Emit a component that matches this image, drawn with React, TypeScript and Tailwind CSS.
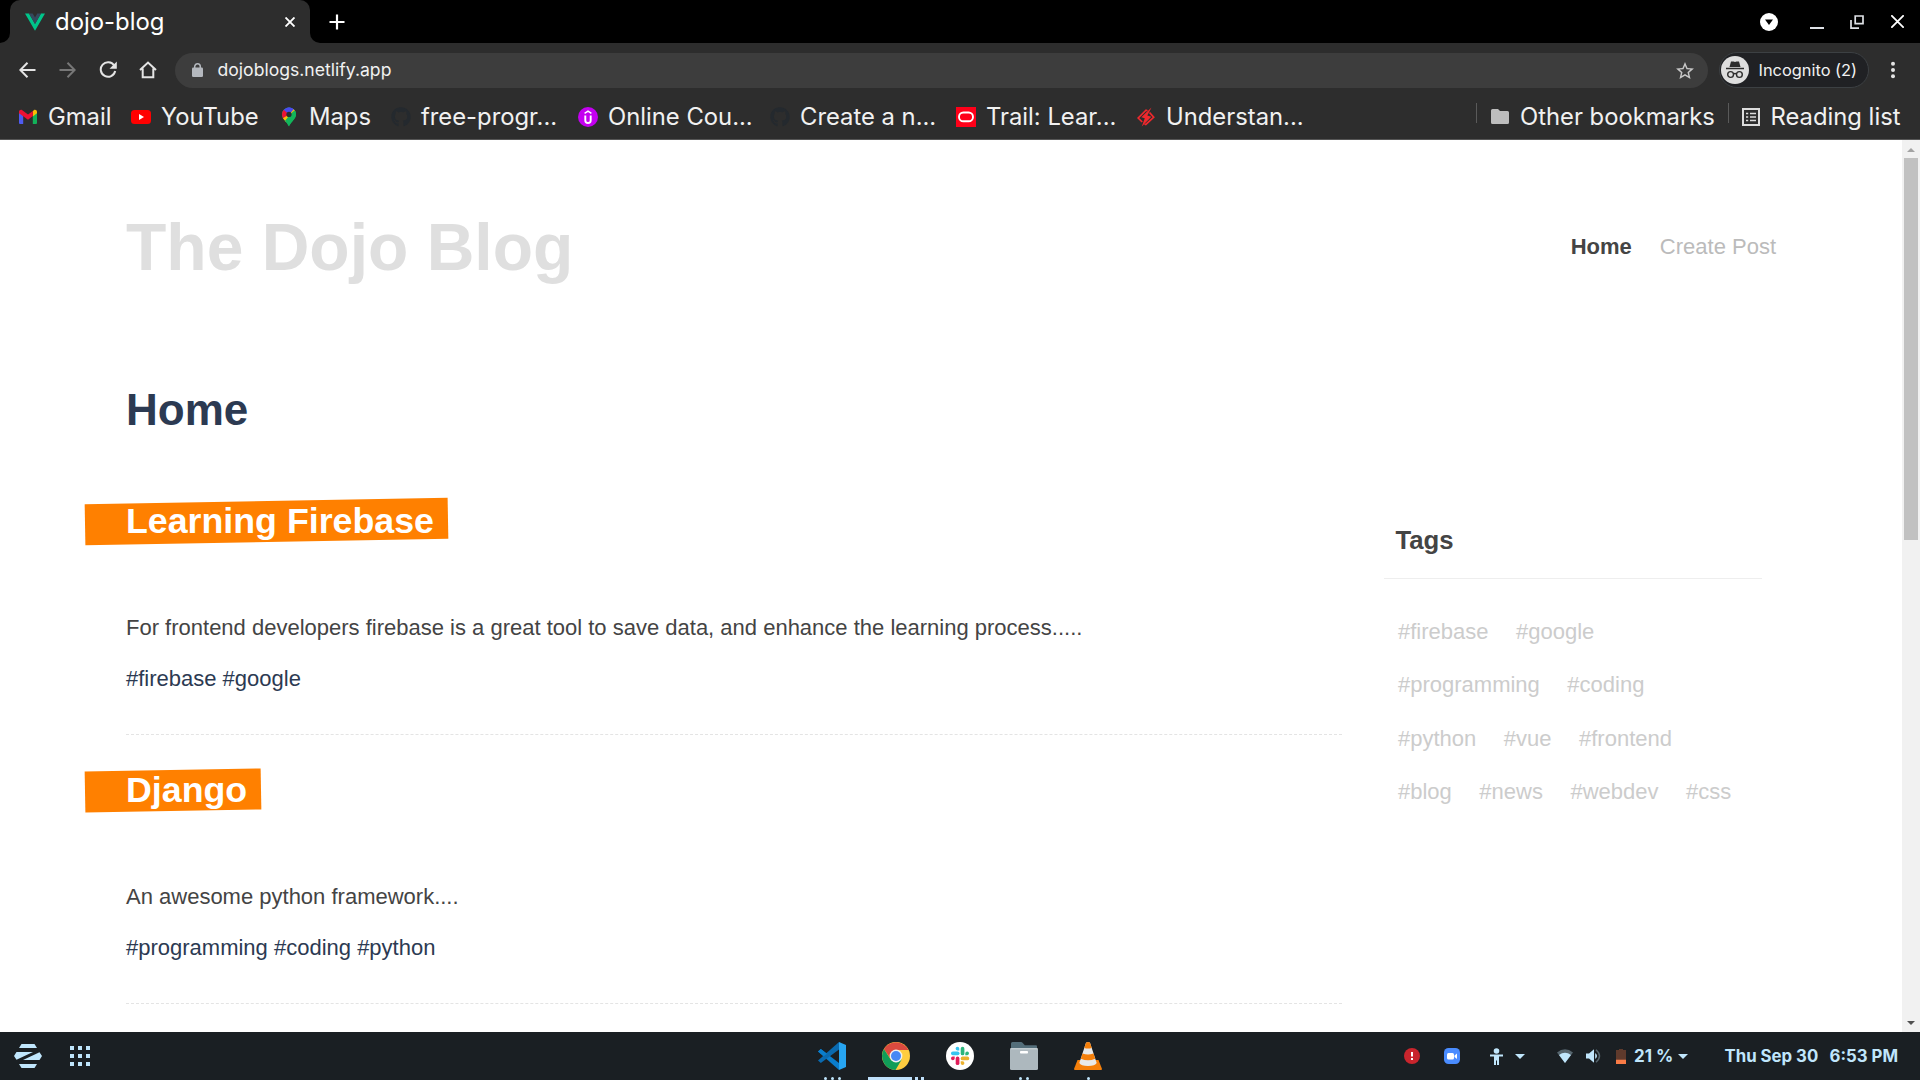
import React from "react";
import { FaGithub } from "react-icons/fa";

const GmailIcon = () => (
  <svg viewBox="0 0 20 20" className="size-5 shrink-0">
    <path d="M1 5.5V16q0 1 1 1h3.2V8.5z" fill="#4f5bf0" />
    <path d="M19 5.5V16q0 1-1 1h-3.200V8.500z" fill="#12b159" />
    <path d="M14.800 4.500v5L19 6.300V4.800c0-1.800-2-2.600-3.300-1.500z" fill="#fbbc04" />
    <path d="M1 4.800c0-1.800 2-2.600 3.300-1.500L10 7.600l4.800-3.700v5.200L10 12.800 5.200 9.200 1 6.200z" fill="#ee1133" />
  </svg>
);
const YouTubeIcon = () => (
  <svg viewBox="0 0 20 20" className="size-5 shrink-0">
    <rect x="0" y="3" width="20" height="14" rx="3.500" fill="#ff0000" />
    <path d="M8 7l5 3-5 3z" fill="#fff" />
  </svg>
);
const MapsIcon = () => (
  <svg viewBox="0 0 20 20" className="size-5 shrink-0">
    <defs>
      <clipPath id="pin">
        <path d="M10 .4a7 7 0 0 0-7 7c0 5 4.700 6.500 7 12.200 2.300-5.700 7-7.200 7-12.200a7 7 0 0 0-7-7z" />
      </clipPath>
    </defs>
    <g clipPath="url(#pin)">
      <rect width="20" height="20" fill="#12b55b" />
      <path d="M0 0h20v2L10 7.500 0 3z" fill="#4a49ee" />
      <path d="M10 7.400L4.400 2.600 0 7v6l4-1z" fill="#ee1133" />
      <path d="M2 12.500L10 7.400 14.500 2l3.500 1-8.500 8.500-4 5z" fill="#fbbc04" />
      <path d="M7 0h9.500l-6 7z" fill="#4a49ee" />
      <path d="M12.500 6L16 3l3 3-6 9-4 5-4-5z" fill="#12b55b" />
    </g>
    <circle cx="10" cy="7.400" r="2.600" fill="#2d2d2d" />
  </svg>
);
const GithubIcon = () => <FaGithub className="size-5 shrink-0 text-[#24292e]" />;
const UdemyIcon = () => (
  <svg viewBox="0 0 20 20" className="size-5 shrink-0" fill="none" stroke="#fff">
    <circle cx="10" cy="10" r="10" fill="#c400f0" stroke="none" />
    <path d="M7.300 8.500v4.700q0 2.800 2.700 2.800t2.700-2.800V8.500" strokeWidth="1.900" />
    <path d="M6.600 6.300L10 4.200l3.400 2.100" strokeWidth="1.500" />
  </svg>
);
const OracleIcon = () => (
  <svg viewBox="0 0 20 20" className="size-5 shrink-0">
    <rect width="20" height="20" fill="#ff0019" />
    <rect x="3" y="5.500" width="14" height="8.800" rx="4.400" fill="none" stroke="#fff" strokeWidth="1.900" />
  </svg>
);
const BoltIcon = () => (
  <svg viewBox="0 0 20 20" className="size-5 shrink-0" fill="none" stroke="#f0282d" strokeWidth="1.700">
    <path d="M11.500 3.800L10 3.200 2.200 11l4 4M13.500 5.500l4.200 4.800L9.800 17.500l-1.300-.6" />
    <path d="M15.500.5L5.300 10.200l3.500 1L5.800 19.500l9.500-9.700-4-1.200z" fill="#f0282d" stroke="none" />
  </svg>
);

const BOOKMARKS = [
  { label: "Gmail", icon: <GmailIcon />, width: "w-[113px]" },
  { label: "YouTube", icon: <YouTubeIcon />, width: "w-[148px]" },
  { label: "Maps", icon: <MapsIcon />, width: "w-[112px]" },
  { label: "free-progr...", icon: <GithubIcon />, width: "w-[187px]" },
  { label: "Online Cou...", icon: <UdemyIcon />, width: "w-[192px]" },
  { label: "Create a n...", icon: <GithubIcon />, width: "w-[186px]" },
  { label: "Trail: Lear...", icon: <OracleIcon />, width: "w-[180px]" },
  { label: "Understan...", icon: <BoltIcon />, width: "w-[180px]" },
];

function TabStrip() {
  return (
    <div className="flex h-[43px] shrink-0 items-stretch bg-black">
      <div className="flex w-[10px] items-end bg-[#2d2d2d]">
        <div className="h-full w-full rounded-br-[10px] bg-black" />
      </div>
      <div className="bg-black">
        <div className="flex h-full w-[300px] items-center rounded-t-[10px] bg-[#2d2d2d] pl-[15px]">
          <svg viewBox="0 0 20 18" className="h-[18px] w-5">
            <path d="M0 .5h4L10 11 16 .5h4L10 17.700z" fill="#00c58a" />
            <path d="M4 .5h3.700L10 4.500 12.300.5H16L10 11z" fill="#34495e" />
          </svg>
          <span className="ml-[10px] w-[229.500px] text-[23.900px] text-white">dojo-blog</span>
          <svg viewBox="0 0 10 10" className="size-[10px]" stroke="#fff" strokeWidth="1.900">
            <path d="M.5.5l9 9M9.500.5l-9 9" />
          </svg>
        </div>
      </div>
      <div className="flex w-[10px] bg-[#2d2d2d]">
        <div className="h-full w-full rounded-bl-[10px] bg-black" />
      </div>
      <svg viewBox="0 0 16 16" className="mt-[13.500px] ml-[9px] size-4" stroke="#fff" strokeWidth="2.200">
        <path d="M8 .5v15M.5 8h15" />
      </svg>
      <div className="mr-4 ml-auto flex items-center">
        <svg viewBox="0 0 18 18" className="mr-[32px] size-[18px]">
          <circle cx="9" cy="9" r="9" fill="#fff" />
          <path d="M5 6.500h8L9 12z" fill="#000" />
        </svg>
        <div className="mt-3 mr-[26px] h-[2px] w-[14px] bg-[#dee1e6]" />
        <svg viewBox="0 0 14 14" className="mr-[27px] size-[14px]" fill="none" stroke="#dee1e6" strokeWidth="1.700">
          <path d="M5.200 1h7.800v7.600H5.200z" />
          <path d="M1 5v8.200h8" />
        </svg>
        <svg viewBox="0 0 13 13" className="size-[13px]" stroke="#fff" strokeWidth="1.800">
          <path d="M.3.3l12.400 12.400M12.700.3L.3 12.700" />
        </svg>
      </div>
    </div>
  );
}

function Toolbar() {
  return (
    <div className="flex h-[54px] shrink-0 items-center pl-[19px]">
      <svg viewBox="0 0 17 16" className="h-4 w-[17px]" fill="none" stroke="#e4e4e4" strokeWidth="2">
        <path d="M16.500 8H1.500M8.500.8L1.300 8l7.200 7.200" />
      </svg>
      <svg viewBox="0 0 17 16" className="ml-[23px] h-4 w-[17px]" fill="none" stroke="#777" strokeWidth="2">
        <path d="M.5 8h15M8.500.8L15.700 8l-7.200 7.200" />
      </svg>
      <svg viewBox="0 0 18 18" className="ml-[23px] size-[18px]" fill="none" stroke="#e4e4e4" strokeWidth="2">
        <path d="M15.200 4.500A7.300 7.300 0 1 0 16.200 10" />
        <path d="M17.800.5v7.300h-7.300z" fill="#e4e4e4" stroke="none" />
      </svg>
      <svg viewBox="0 0 18 18" className="ml-[22px] size-[18px]" fill="none" stroke="#e4e4e4" strokeWidth="2">
        <path d="M1 9L9 1.600 17 9M3.700 7.500v8.700h10.600V7.500" />
      </svg>
      <div className="ml-[18px] flex h-[35px] w-[1533px] items-center rounded-full bg-[#3d3d3d] pl-[17px]">
        <svg viewBox="0 0 11 14" className="h-[14px] w-[11px]">
          <rect y="4.500" width="11" height="9.500" rx="1.300" fill="#b4b8be" />
          <path d="M2.700 5.500V3.600a2.800 2.800 0 0 1 5.600 0v1.900" fill="none" stroke="#b4b8be" strokeWidth="1.500" />
        </svg>
        <span className="ml-[14.500px] pt-px text-[17.600px] text-[#f1f1f1]">dojoblogs.netlify.app</span>
        <svg viewBox="2 2 20 19" className="mr-[14px] ml-auto h-[17px] w-[18px]">
          <path
            fill="#c8c8c8"
            d="M22 9.240l-7.190-.62L12 2 9.190 8.630 2 9.240l5.460 4.730L5.820 21 12 17.270 18.180 21l-1.630-7.030L22 9.240zM12 15.400l-3.760 2.270 1-4.280-3.320-2.880 4.380-.38L12 6.100l1.710 4.040 4.380.38-3.320 2.880 1 4.280L12 15.400z"
          />
        </svg>
      </div>
      <div className="ml-[11px] flex h-[36px] w-[150px] items-center rounded-full border border-[#3c4043] bg-[#202124] pl-px">
        <svg viewBox="0 0 28 28" className="size-7 shrink-0">
          <circle cx="14" cy="14" r="14" fill="#dedede" />
          <path d="M10 5.500h2.500q1.500.8 3 0H18l1.500 5.500h-11z" fill="#2d2d2d" />
          <path d="M5 12.500h18" stroke="#2d2d2d" strokeWidth="1.500" />
          <g fill="none" stroke="#2d2d2d" strokeWidth="1.400">
            <circle cx="9.600" cy="18.500" r="2.900" />
            <circle cx="18.400" cy="18.500" r="2.900" />
            <path d="M12.500 18q1.500-1 3 0" />
          </g>
        </svg>
        <span className="ml-[9.500px] text-[16.400px] whitespace-nowrap text-[#f1f1f1]">Incognito (2)</span>
      </div>
      <svg viewBox="0 0 4 16" className="ml-[21.500px] h-4 w-1 overflow-visible" fill="#e4e4e4">
        <circle cx="2" cy="1.700" r="2" />
        <circle cx="2" cy="8" r="2" />
        <circle cx="2" cy="14.300" r="2" />
      </svg>
    </div>
  );
}

function BookmarkBar() {
  return (
    <div className="flex h-[43px] shrink-0 items-center border-b border-[#565656] pb-[3px] pl-[18px] text-[23.800px] whitespace-nowrap text-[#f1f1f1]">
      {BOOKMARKS.map((b) => (
        <div key={b.label} className={"flex shrink-0 items-center gap-[10px] " + b.width}>
          {b.icon}
          <span>{b.label}</span>
        </div>
      ))}
      <div className="ml-[160px] h-5 w-px -translate-y-1 bg-[#5a5a5a]" />
      <svg viewBox="0 0 18 15" className="ml-[14px] h-[15px] w-[18px]">
        <path d="M0 1.500Q0 0 1.500 0H7l2 2h7.500Q18 2 18 3.500v10q0 1.500-1.500 1.500h-15Q0 15 0 13.500z" fill="#bdbdbd" />
      </svg>
      <span className="ml-[11px] w-[194px]">Other bookmarks</span>
      <div className="ml-[14px] h-5 w-px -translate-y-1 bg-[#5a5a5a]" />
      <svg viewBox="0 0 18 18" className="ml-[13px] size-[18px]" fill="none" stroke="#dcdcdc">
        <path d="M1 1h16v16H1z" strokeWidth="2" />
        <path d="M4 5.500h2.200M4 9h2.200M4 12.500h2.200M8 5.500h6M8 9h6M8 12.500h6" strokeWidth="1.700" />
      </svg>
      <span className="ml-[10.500px]">Reading list</span>
    </div>
  );
}

const POSTS = [
  {
    title: "Learning Firebase",
    body: "For frontend developers firebase is a great tool to save data, and enhance the learning process.....",
    tags: "#firebase #google",
  },
  { title: "Django", body: "An awesome python framework....", tags: "#programming #coding #python" },
];

const TAG_ROWS = [
  ["#firebase", "#google"],
  ["#programming", "#coding"],
  ["#python", "#vue", "#frontend"],
  ["#blog", "#news", "#webdev", "#css"],
];

function Page() {
  return (
    <div className="flex min-h-0 flex-1 bg-white font-['Liberation_Sans',sans-serif] text-[22px] leading-[26px] text-[#444]">
      <main className="flex-1 overflow-hidden px-[126px] pt-[67px]">
        <header className="flex items-start justify-between">
          <h1 className="text-[66px] leading-[80px] font-bold text-[#dfdfdf]">The Dojo Blog</h1>
          <nav className="mt-[27px] flex gap-[28px]">
            <a className="font-bold">Home</a>
            <a className="text-[#bbb]">Create Post</a>
          </nav>
        </header>
        <h2 className="mt-[98px] text-[44px] leading-[50px] font-bold text-[#2c3a52]">Home</h2>
        <div className="flex">
          <div className="w-[1216px] pt-[31px]">
            {POSTS.map((p) => (
              <article key={p.title} className="border-b border-dashed border-[#e4e4e4] pt-[34px] pb-[42px]">
                <h3 className="relative isolate w-fit text-[35.750px] leading-[42px] font-bold text-white">
                  <span className="absolute top-[1px] -right-[14px] -left-[41px] -z-10 h-[41px] -rotate-1 bg-[#ff8000]" />
                  {p.title}
                </h3>
                <p className="mt-[73px]">{p.body}</p>
                <p className="mt-[25px] text-[#2c3a52]">{p.tags}</p>
              </article>
            ))}
          </div>
          <aside className="ml-[42px] w-[378px] pt-[90px]">
            <h4 className="border-b border-[#eee] pb-[23px] pl-[11.500px] text-[25.740px] leading-[30px] font-bold">Tags</h4>
            <div className="mt-[26px] pl-[14px] leading-[53.400px] text-[#ccc]">
              {TAG_ROWS.map((row) => (
                <div key={row[0]} className="flex gap-[27.500px]">
                  {row.map((t) => (
                    <span key={t}>{t}</span>
                  ))}
                </div>
              ))}
            </div>
          </aside>
        </div>
      </main>
      <div className="flex w-[18px] flex-col items-center bg-[#f1f1f1]">
        <svg viewBox="0 0 18 18" className="size-[18px]">
          <path d="M5 12h8L9 8z" fill="#a3a3a3" />
        </svg>
        <div className="h-[382px] w-[14px] bg-[#c1c1c1]" />
        <svg viewBox="0 0 18 18" className="mt-auto size-[18px]">
          <path d="M5 7h8l-4 4z" fill="#505050" />
        </svg>
      </div>
    </div>
  );
}

const VsCode = () => (
  <svg viewBox="0 0 28 28" className="size-7">
    <path d="M0 9.500L2.800 7 21 21v7z" fill="#0a7dcc" />
    <path d="M0 18.500L2.800 21 21 7.500V0z" fill="#0a6ab0" />
    <path d="M0 9.500L2.800 7 9 11.700 5.800 14.300z" fill="#0a7dcc" />
    <path d="M21 0l7 3v22l-7 3z" fill="#27a5f2" />
  </svg>
);
const Chrome = () => (
  <svg viewBox="0 0 28 28" className="size-7">
    <circle cx="14" cy="14" r="14" fill="#ffcd40" />
    <path d="M1.900 7A14 14 0 0 1 26.100 7.500V8H14l-5.200 9z" fill="#db4a3f" />
    <path d="M1.900 7A14 14 0 0 0 13.500 28l6.200-10.500L14 20 8.500 17.200z" fill="#109d58" />
    <circle cx="14" cy="14" r="6.400" fill="#f1f1f1" />
    <circle cx="14" cy="14" r="5" fill="#4688f4" />
  </svg>
);
const Slack = () => (
  <svg viewBox="0 0 28 28" className="size-7">
    <circle cx="14" cy="14" r="14" fill="#fff" />
    <g fill="#36c5f0">
      <rect x="5" y="9.500" width="8.500" height="3.700" rx="1.850" />
      <path d="M13.300 8.500h-2a1.850 1.850 0 1 1 2-2z" />
    </g>
    <g fill="#2eb67d">
      <rect x="14.700" y="4.800" width="3.700" height="8.500" rx="1.850" />
      <path d="M19.300 13.200v-2a1.850 1.850 0 1 1 2 2z" />
    </g>
    <g fill="#ecb22e">
      <rect x="14.700" y="14.600" width="8.500" height="3.700" rx="1.850" />
      <path d="M14.700 19.300h2a1.850 1.850 0 1 1-2 2z" />
    </g>
    <g fill="#e01e5a">
      <rect x="9.700" y="14.600" width="3.700" height="8.500" rx="1.850" />
      <path d="M8.700 14.600v2a1.850 1.850 0 1 1-2-2z" />
    </g>
  </svg>
);
const Files = () => (
  <svg viewBox="0 0 28 28" className="size-7">
    <path d="M1 8V1.500Q1 0 2.500 0H11q1 0 1.800 1l2 2.200H26q1 0 1 1.300V8z" fill="#546e7a" />
    <path d="M13 6h14v1H13z" fill="#8fa3ad" />
    <rect y="6" width="28" height="22" rx="1.500" fill="#adb8be" />
    <path d="M0 7.500Q0 6 1.500 6h25Q28 6 28 7.500z" fill="#c2cbd0" />
    <rect x="10" y="9" width="8" height="2.600" rx=".8" fill="#fff" />
  </svg>
);
const Vlc = () => (
  <svg viewBox="0 0 28 28" className="size-7">
    <path d="M3.500 18h21L28 27q0 1-1 1H1q-1 0-1-1z" fill="#f57f0a" />
    <path d="M12 .8q2-1.500 4 0L22.700 21q-1.500 3-8.700 3t-8.700-3z" fill="#e9e9e9" />
    <path d="M12 .8q2-1.500 4 0l1.700 5.100q-3.700 1.200-7.400 0zM8.500 11.400q5.500 2 11 0l1.700 5.300q-7 3-14.400 0z" fill="#f57f0a" />
  </svg>
);

const Dot = () => <span className="size-[3px] rounded-full bg-[#bfe5fb]" />;

function Caret({ className }: { className: string }) {
  return (
    <svg viewBox="0 0 10 5" className={"h-[5px] w-[10px] " + className} fill="#c0e6fc">
      <path d="M0 0h10L5 5z" />
    </svg>
  );
}

const APPS = [
  { name: "code", icon: <VsCode />, marks: <div className="flex gap-1"><Dot /><Dot /><Dot /></div> },
  {
    name: "chrome",
    icon: <Chrome />,
    marks: (
      <div className="flex w-[56px] shrink-0 gap-[3px]">
        <span className="h-[3px] w-[44px] bg-[#bfe0fb]" />
        <span className="size-[3px] bg-[#bfe0fb]" />
        <span className="size-[3px] bg-[#bfe0fb]" />
      </div>
    ),
  },
  { name: "slack", icon: <Slack />, marks: <div className="h-[3px]" /> },
  { name: "files", icon: <Files />, marks: <div className="flex gap-1"><Dot /><Dot /></div> },
  { name: "vlc", icon: <Vlc />, marks: <Dot /> },
];

function Taskbar() {
  return (
    <div className="flex h-12 shrink-0 bg-[#1a1f23] text-[16.800px] font-bold text-[#c0e6fc]">
      <div className="flex w-[800px] items-center pl-[14px]">
        <svg viewBox="0 0 28 24" className="h-6 w-7" fill="#c0e6fc">
          <path d="M7.500 0h13l2.500 4H5zM2.500 8H19L2.500 15.800L0 12zM25.500 16H9L25.500 8.200L28 12zM5 20h18l-2.500 4h-13z" />
        </svg>
        <div className="ml-7 grid grid-cols-3 gap-1">
          {Array.from({ length: 9 }, (_, i) => (
            <span key={i} className="size-1 bg-[#c0e6fc]" />
          ))}
        </div>
      </div>
      <div className="flex w-[320px]">
        {APPS.map((a) => (
          <div key={a.name} className="flex w-16 shrink-0 flex-col items-center justify-between pt-[10px]">
            {a.icon}
            {a.marks}
          </div>
        ))}
      </div>
      <div className="ml-auto flex w-[516px] items-center whitespace-nowrap">
        <svg viewBox="0 0 16 16" className="size-4">
          <circle cx="8" cy="8" r="8" fill="#c9252d" />
          <path d="M7 4h2v4.500H7zM7 10h2v2H7z" fill="#fff" />
        </svg>
        <svg viewBox="0 0 16 16" className="ml-6 size-4">
          <rect width="16" height="16" rx="4.500" fill="#4a8cff" />
          <rect x="3" y="5" width="7" height="6.500" rx="1.500" fill="#fff" />
          <path d="M10.500 7.500L13 5.500v5.500l-2.500-2z" fill="#fff" />
        </svg>
        <svg viewBox="0 0 13 17" className="ml-[30px] h-[17px] w-[13px]" fill="#c0e6fc">
          <circle cx="6.500" cy="3" r="2.800" />
          <path d="M0 6.500h13v2H9V17H7v-4.500H6V17H4V8.500H0z" />
        </svg>
        <Caret className="ml-3" />
        <svg viewBox="0 0 16 14" className="ml-8 h-[14px] w-4">
          <path d="M0 3.500Q8-3 16 3.500L8 14z" fill="#56656e" />
          <path d="M2 6Q8 1.500 14 6L8 14z" fill="#c0e6fc" />
        </svg>
        <svg viewBox="0 0 15 14" className="ml-[12.500px] h-[14px] w-[15px]">
          <path d="M0 4.500h3L8 .3v13.400L3 9.500H0z" fill="#c0e6fc" />
          <path d="M9.200 4q3.600 3 0 6z" fill="#c0e6fc" />
          <path d="M10 .8q7 6.200 0 12.400" fill="none" stroke="#56656e" strokeWidth="1.500" />
        </svg>
        <svg viewBox="0 0 10 15" className="ml-[15.500px] h-[15px] w-[10px]">
          <path d="M0 1h3V0h4v1h3v9H0z" fill="#5f3a2c" />
          <path d="M0 10.500h10V15H0z" fill="#f97b46" />
        </svg>
        <span className="ml-[8px] w-[44px] pt-px text-[17px]">21 %</span>
        <Caret className="" />
        <span className="ml-[36.500px] w-[105px] pt-px">Thu Sep 30</span>
        <span className="pt-px">6:53 PM</span>
      </div>
    </div>
  );
}

export default function App() {
  return (
    <div className="flex h-[1080px] w-[1920px] flex-col overflow-hidden bg-[#2d2d2d] font-[Inter,sans-serif]">
      <TabStrip />
      <Toolbar />
      <BookmarkBar />
      <Page />
      <Taskbar />
    </div>
  );
}
